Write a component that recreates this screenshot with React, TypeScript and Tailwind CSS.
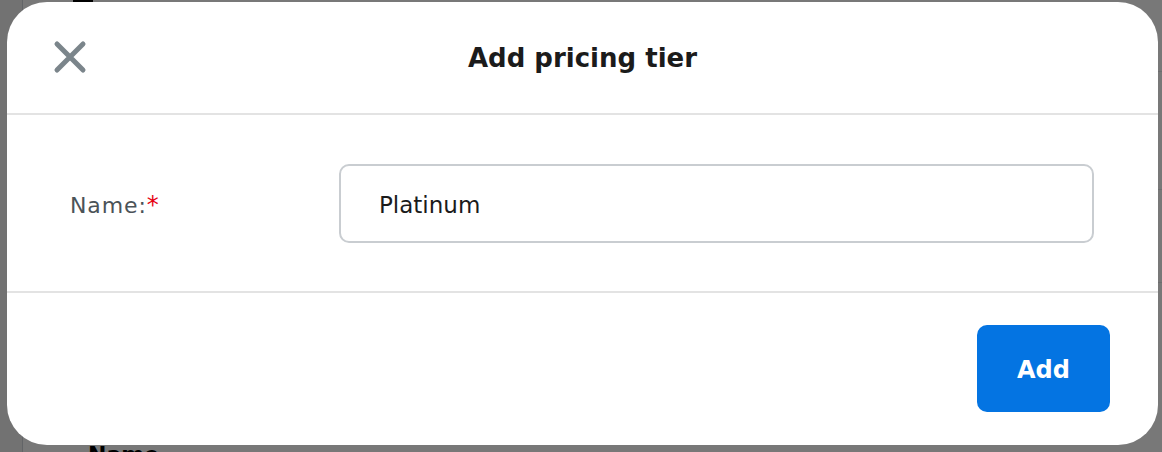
import React, { useState } from 'react';

function CloseIcon() {
  return (
    <svg width="34" height="34" viewBox="0 0 34 34" fill="none" stroke="#7b858b" strokeWidth="5" strokeLinecap="round">
      <path d="M4 4 L30 30 M30 4 L4 30" />
    </svg>
  );
}

export default function App() {
  const [name, setName] = useState('Platinum');

  return (
    <div className="relative h-[452px] w-full overflow-hidden bg-white" style={{ fontFamily: '"DejaVu Sans", Inter, sans-serif' }}>
      {/* page behind the modal */}
      <div className="flex h-full">
        <div className="w-[23px] shrink-0 border-r border-gray-300 bg-[#f3f3f3]" />
        <div className="flex-1">
          <div className="ml-[50px] h-[3px] w-[20px] bg-black" />
          <div className="h-[69px] border-b border-gray-200" />
          <div className="h-[118px] border-b border-gray-200" />
          <div className="h-[93px] border-b border-gray-200" />
          <div className="pl-[65px] pt-[155px] text-[22px] font-bold text-black">Name</div>
        </div>
      </div>

      {/* backdrop */}
      <div className="absolute inset-0 bg-black/[0.53]" />

      {/* dialog */}
      <div className="absolute left-[7px] top-[2px] flex h-[443px] w-[1151px] flex-col rounded-[40px] bg-white">
        <div className="relative flex h-[113px] items-center justify-center border-b-2 border-[#e3e3e3]">
          <button className="absolute left-[46px] top-[38px]">
            <CloseIcon />
          </button>
          <h2 className="pt-[2px] text-[26px] font-bold text-[#1b1b1b]">Add pricing tier</h2>
        </div>

        <div className="flex h-[178px] items-center border-b-2 border-[#e3e3e3] pl-[63px] pr-[64px]">
          <label className="w-[269px] pt-[4px] text-[22px] tracking-[0.04em] text-[#4b5358]">
            Name:<span className="text-[24px] text-[#e60012]">*</span>
          </label>
          <input
            value={name}
            onChange={(e) => setName(e.target.value)}
            className="h-[79px] flex-1 rounded-[10px] border-2 border-[#c9cdd1] px-[38px] pt-[3px] text-[23px] text-[#1b1b1b] outline-none"
          />
        </div>

        <div className="flex flex-1 items-start justify-end pr-[48px] pt-[32px]">
          <button className="h-[87px] w-[133px] rounded-[10px] bg-[#0474e2] pt-[3px] text-[24px] font-bold text-white">
            Add
          </button>
        </div>
      </div>
    </div>
  );
}
